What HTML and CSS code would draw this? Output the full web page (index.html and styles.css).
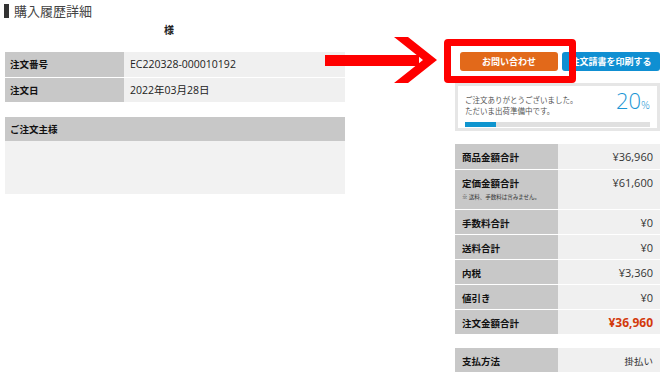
FILE: index.html
```html
<!DOCTYPE html>
<html lang="ja">
<head>
    <meta charset="UTF-8">
    <meta name="viewport" content="width=device-width, initial-scale=1.0">
    <title>購入履歴詳細</title>
    <link rel="stylesheet" href="styles.css">
</head>
<body>
    <header class="page-head">
        <h1 class="page-title">購入履歴詳細</h1>
        <p class="greeting">様</p>
    </header>

    <main class="detail">
        <section class="left">
            <table class="info">
                <tr><th>注文番号</th><td class="num">EC220328-000010192</td></tr>
                <tr><th>注文日</th><td class="num">2022年03月28日</td></tr>
            </table>
            <div class="orderer">
                <h2 class="orderer-head">ご注文主様</h2>
                <div class="orderer-body"></div>
            </div>
        </section>

        <aside class="right">
            <div class="actions">
                <button class="btn btn-contact">お問い合わせ</button>
                <button class="btn btn-print"><span>注文請書を印刷する</span></button>
            </div>

            <div class="status">
                <div class="status-top">
                    <p class="status-msg">ご注文ありがとうございました。<br>ただいま出荷準備中です。</p>
                    <p class="status-pct">20<small>%</small></p>
                </div>
                <div class="bar"><div class="bar-fill" style="width: 17%"></div></div>
            </div>

            <table class="summary">
                <tr><th>商品金額合計</th><td>¥36,960</td></tr>
                <tr class="tall"><th>定価金額合計<span class="note">※ 送料、手数料は含みません。</span></th><td>¥61,600</td></tr>
                <tr><th>手数料合計</th><td>¥0</td></tr>
                <tr><th>送料合計</th><td>¥0</td></tr>
                <tr><th>内税</th><td>¥3,360</td></tr>
                <tr><th>値引き</th><td>¥0</td></tr>
                <tr><th>注文金額合計</th><td class="total">¥36,960</td></tr>
            </table>

            <table class="summary pay">
                <tr><th>支払方法</th><td class="jp">掛払い</td></tr>
            </table>
        </aside>
    </main>

    <!-- annotation overlay -->
    <svg class="arrow" width="125" height="60" viewBox="0 0 125 60">
        <rect x="5" y="25" width="94" height="11" fill="#ff0000"/>
        <polygon points="74,7 88,7 117,30 88,53 74,53 103,30" fill="#ff0000"/>
    </svg>
    <div class="highlight"></div>
</body>
</html>
```

FILE: styles.css
```css
*{
    margin: 0;
    padding: 0;
    box-sizing: border-box;
}
body{
    background-color: #fff;
    font-family: "Noto Sans CJK JP", sans-serif;
    color: #222;
}
.page-title{
    margin: 4px 0 0 4px;
    padding-left: 5px;
    border-left: 5px solid #333;
    font-size: 13px;
    line-height: 14px;
    font-weight: normal;
    color: #444;
}
.greeting{
    width: 328px;
    margin: 6px 0 0 5px;
    text-align: center;
    font-size: 10px;
    line-height: 12px;
    font-weight: bold;
}
.detail{
    display: flex;
    gap: 110px;
    padding-left: 5px;
    margin-top: 16px;
}
.left{
    width: 340px;
}
.info, .summary{
    width: 100%;
    border-collapse: collapse;
}
.info th, .summary th{
    background-color: #c8c8c8;
    text-align: left;
    font-size: 9.5px;
    font-weight: bold;
    color: #111;
    border-bottom: 1px solid #fff;
}
.info td, .summary td{
    background-color: #f0f0f0;
    border-bottom: 1px solid #fff;
}
.info th{
    width: 119px;
    height: 25px;
    padding: 0 5px;
}
.info td{
    padding-left: 6px;
}
.num{
    font-family: "Open Sans", "Noto Sans CJK JP", sans-serif;
    font-size: 10.5px;
}
.orderer{
    margin-top: 14px;
}
.orderer-head{
    height: 24px;
    line-height: 24px;
    padding-left: 5px;
    background-color: #c8c8c8;
    font-size: 9.5px;
    color: #111;
}
.orderer-body{
    height: 53px;
    background-color: #f2f2f2;
}
.right{
    width: 205px;
}
.actions{
    display: flex;
    gap: 4px;
    padding-left: 5px;
}
.btn{
    width: 98px;
    height: 19px;
    border: none;
    border-radius: 3px;
    color: #fff;
    font-family: "Noto Sans CJK JP", sans-serif;
    font-size: 9px;
    font-weight: bold;
    display: flex;
    justify-content: center;
    align-items: center;
    white-space: nowrap;
    overflow: hidden;
}
.btn-contact{
    background-color: #e2691a;
}
.btn-print{
    background-color: #0f8fd2;
}
.status{
    margin-top: 12px;
    height: 48px;
    border: 3px solid #e6e6e6;
    padding: 4px 7px 0 7px;
}
.status-top{
    display: flex;
    justify-content: space-between;
    align-items: flex-end;
}
.status-msg{
    font-size: 7.5px;
    line-height: 11px;
    color: #555;
}
.status-pct{
    font-family: "Open Sans", sans-serif;
    font-weight: 300;
    font-size: 22px;
    line-height: 20px;
    color: #1b96d5;
    margin-bottom: 1px;
}
.status-pct small{
    font-size: 11px;
}
.bar{
    margin-top: 6px;
    height: 5px;
    background-color: #e0e0e0;
}
.bar-fill{
    height: 100%;
    background-color: #0f95cf;
}
.summary{
    margin-top: 13px;
}
.summary th{
    width: 103px;
    height: 25px;
    padding: 6px 7px 0 7px;
    vertical-align: top;
    line-height: 14px;
}
.summary td{
    text-align: right;
    vertical-align: top;
    padding: 6px 7px 0 0;
    line-height: 14px;
    font-family: "Open Sans", "Noto Sans CJK JP", sans-serif;
    font-size: 11px;
    color: #333;
}
.summary .tall th{
    height: 40px;
}
.note{
    display: block;
    margin-top: 2px;
    font-size: 5.5px;
    line-height: 10px;
    font-weight: normal;
    white-space: nowrap;
    color: #333;
}
.summary td.total{
    font-weight: bold;
    font-size: 12px;
    color: #d33a0c;
}
.summary td.jp{
    font-family: "Noto Sans CJK JP", sans-serif;
    font-size: 9.5px;
}
.arrow{
    position: absolute;
    left: 320px;
    top: 30px;
}
.highlight{
    position: absolute;
    left: 444px;
    top: 39px;
    width: 132px;
    height: 44px;
    border: 7px solid #ff0000;
    border-radius: 4px;
}
```
